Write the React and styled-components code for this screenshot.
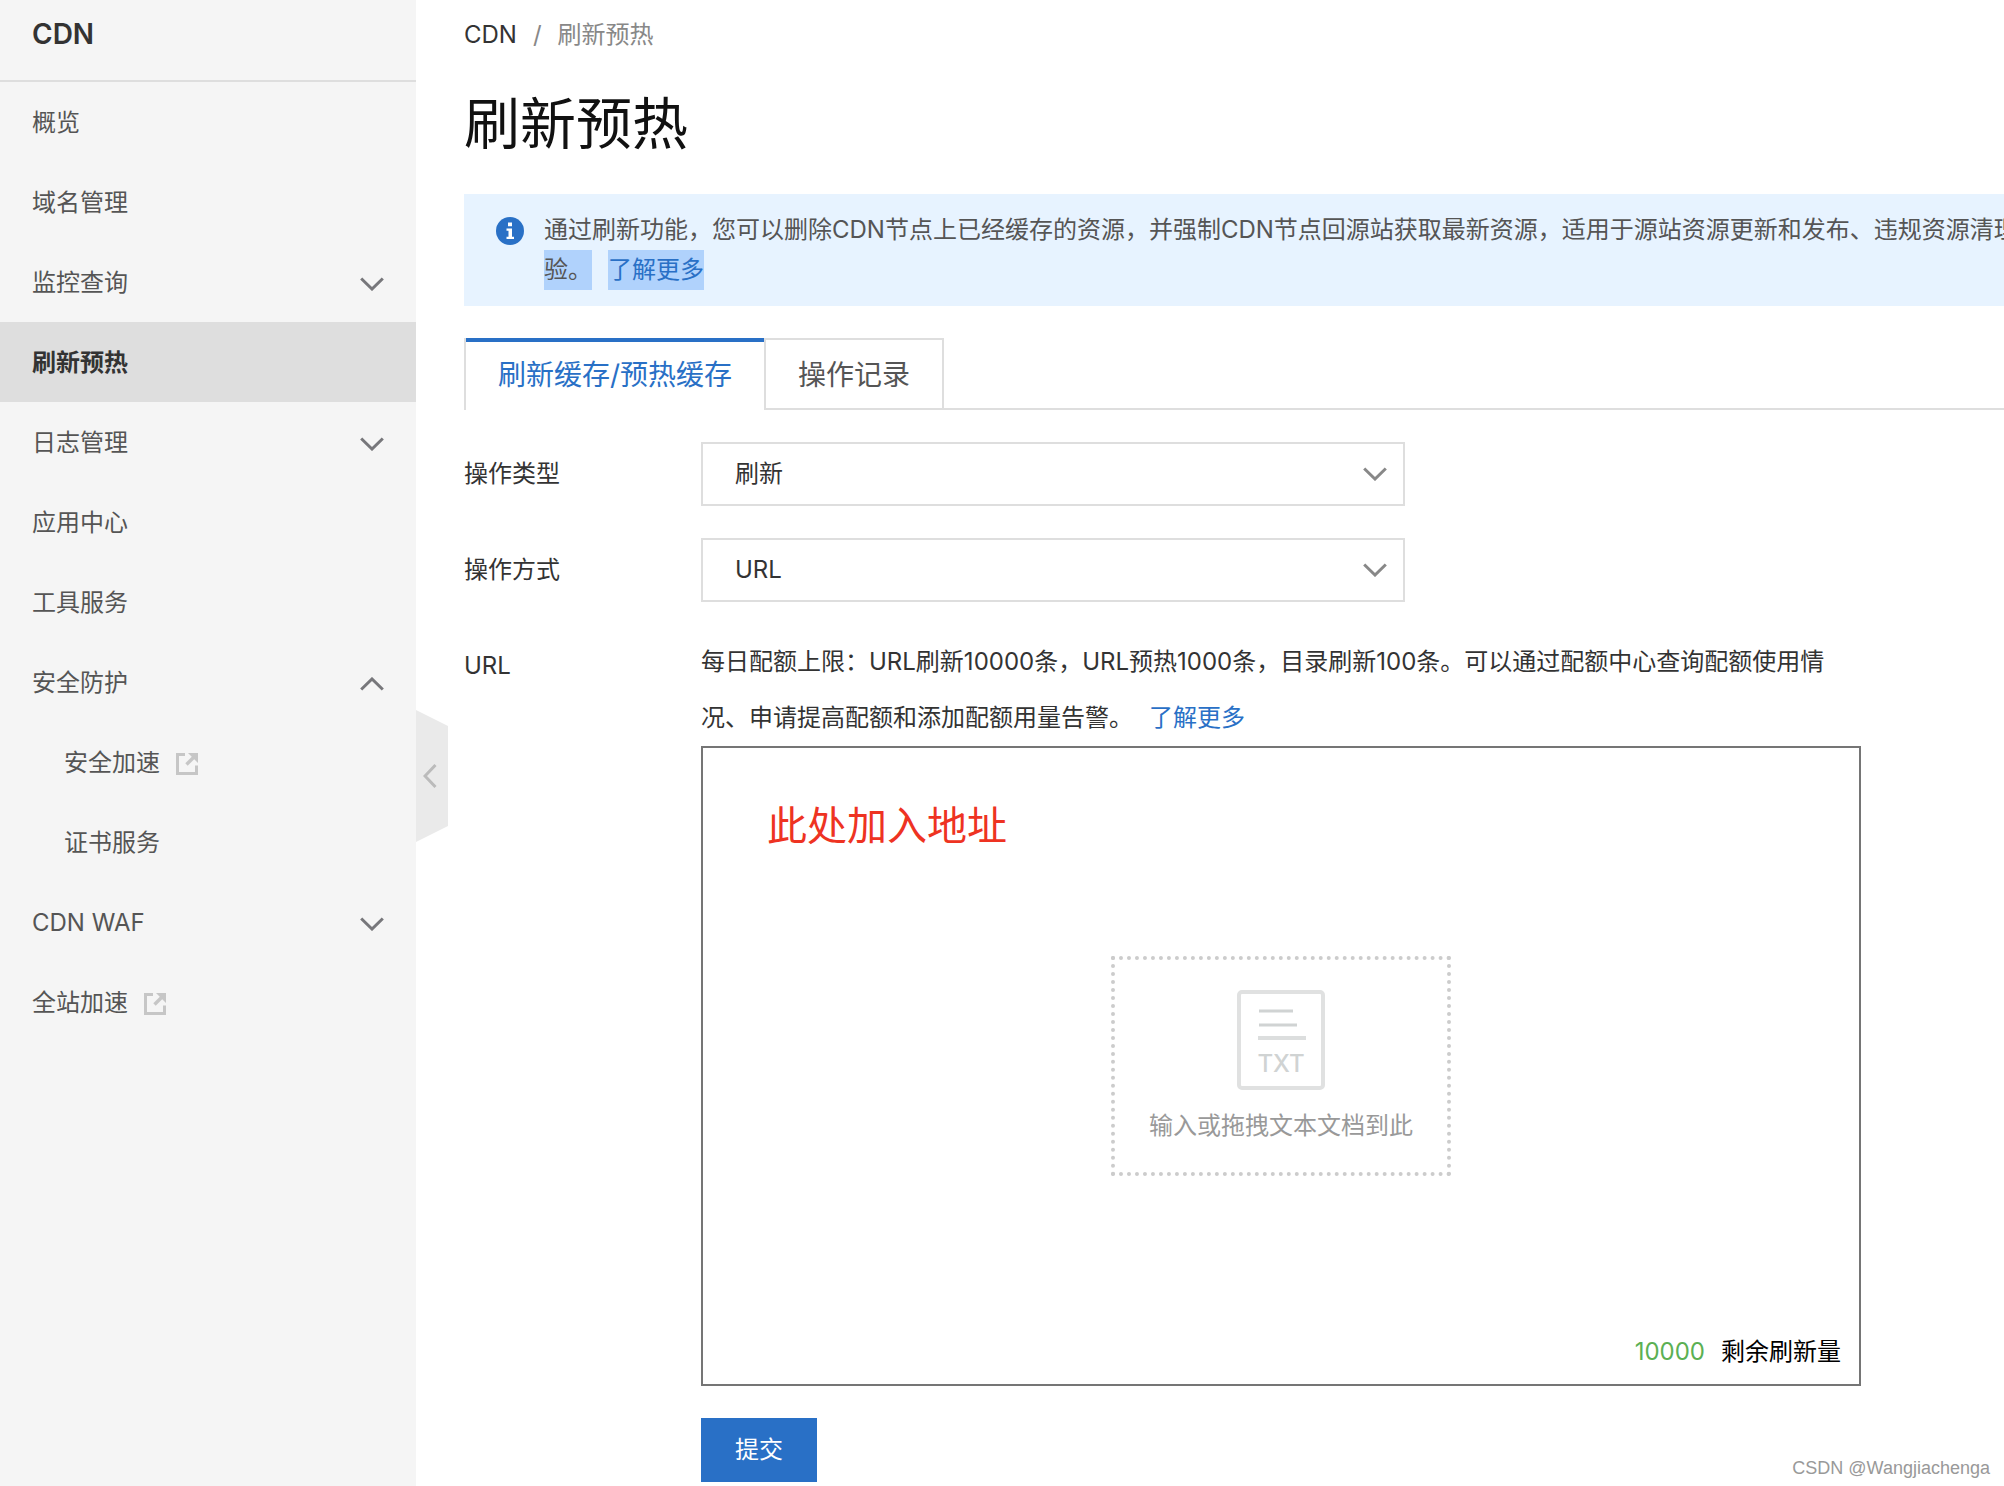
import React from "react"
import styled, { createGlobalStyle, css } from "styled-components"

const menu = [
    { label: "概览" },
    { label: "域名管理" },
    { label: "监控查询", arrow: "down" },
    { label: "刷新预热", active: true },
    { label: "日志管理", arrow: "down" },
    { label: "应用中心" },
    { label: "工具服务" },
    { label: "安全防护", arrow: "up" },
    { label: "安全加速", nested: true, external: true },
    { label: "证书服务", nested: true },
    { label: "CDN WAF", arrow: "down" },
    { label: "全站加速", external: true },
]

const fields = [
    { id: "type", label: "操作类型", options: ["刷新", "预热"] },
    { id: "method", label: "操作方式", options: ["URL", "目录"] },
]

function Chevron({ up }) {
    return (
        <ChevronIcon viewBox="0 0 24 14" $up={up} aria-hidden="true">
            <path d="M1.2 1.5 12 12 22.8 1.5" />
        </ChevronIcon>
    )
}

function External() {
    return (
        <ExternalIcon viewBox="0 0 22 22" aria-hidden="true">
            <path d="M9 1.5H1.5v19h19V12.5" fill="none" stroke="currentColor" strokeWidth="3" />
            <path d="M10.5 11.5 17.5 4.5" fill="none" stroke="currentColor" strokeWidth="3.4" />
            <path d="M12 0H22v10z" fill="currentColor" />
        </ExternalIcon>
    )
}

function Sidebar() {
    return (
        <Aside>
            <Brand>CDN</Brand>
            <nav>
                {menu.map(({ label, arrow, active, nested, external }) => (
                    <MenuItem key={label} href="#" $active={active} $nested={nested}>
                        {label}
                        {external && <External />}
                        {arrow && <Chevron up={arrow === "up"} />}
                    </MenuItem>
                ))}
            </nav>
            <Collapse type="button" aria-label="收起">
                <svg width="14" height="26" viewBox="0 0 14 26" fill="none" stroke="#bbb" strokeWidth="3">
                    <path d="M12.5 2 2 13l10.5 11" />
                </svg>
            </Collapse>
        </Aside>
    )
}

function Notice() {
    return (
        <NoticeBox>
            <svg width="28" height="28" viewBox="0 0 28 28" aria-hidden="true">
                <circle cx="14" cy="14" r="14" fill="#2970c6" />
                <path d="M12 5.5h4v3.8h-4zM10.5 11.5H16v8.3h2V22h-7.5v-2.2h2v-6.1h-2z" fill="#fff" />
            </svg>
            <p>
                通过刷新功能，您可以删除CDN节点上已经缓存的资源，并强制CDN节点回源站获取最新资源，适用于源站资源更新和发布、违规资源清理
                <br />
                <Selected>验。</Selected>
                <Selected as={TextLink} href="#">了解更多</Selected>
            </p>
        </NoticeBox>
    )
}

function UrlField() {
    return (
        <div>
            <Help>
                每日配额上限：URL刷新10000条，URL预热1000条，目录刷新100条。可以通过配额中心查询配额使用情况、申请提高配额和添加配额用量告警。
                <TextLink href="#">了解更多</TextLink>
            </Help>
            <Editor>
                <textarea id="url" defaultValue="此处加入地址" spellCheck={false} />
                <DropHint>
                    <svg width="88" height="100" viewBox="0 0 88 100" fill="none" stroke="#d0d3d3" aria-hidden="true">
                        <rect x="2" y="2" width="84" height="96" rx="3" stroke="#e0e1e1" strokeWidth="4" />
                        <path d="M22 21h34M22 35h38" strokeWidth="3" />
                        <path d="M21 48h48" stroke="#dcdede" strokeWidth="4" />
                        <text x="44" y="82" textAnchor="middle" fontSize="24" fontWeight="500" fill="#d0d3d3" stroke="none">TXT</text>
                    </svg>
                    输入或拖拽文本文档到此
                </DropHint>
                <Quota>
                    <b>10000</b>剩余刷新量
                </Quota>
            </Editor>
            <Submit type="submit">提交</Submit>
        </div>
    )
}

export default function App() {
    return (
        <Page>
            <GlobalStyle />
            <Sidebar />
            <Main>
                <Breadcrumb>
                    <a href="#">CDN</a>
                    <span>/</span>
                    <span>刷新预热</span>
                </Breadcrumb>
                <Title>刷新预热</Title>
                <Notice />
                <Tabs role="tablist">
                    <Tab type="button" role="tab" aria-selected="true" $active>刷新缓存/预热缓存</Tab>
                    <Tab type="button" role="tab" aria-selected="false">操作记录</Tab>
                </Tabs>
                <Form onSubmit={(e) => e.preventDefault()}>
                    {fields.map(({ id, label, options }) => (
                        <React.Fragment key={id}>
                            <Label htmlFor={id}>{label}</Label>
                            <SelectBox>
                                <select id={id}>
                                    {options.map((o) => <option key={o}>{o}</option>)}
                                </select>
                                <Chevron />
                            </SelectBox>
                        </React.Fragment>
                    ))}
                    <Label htmlFor="url">URL</Label>
                    <UrlField />
                </Form>
            </Main>
            <Watermark>CSDN @Wangjiachenga</Watermark>
        </Page>
    )
}

const GlobalStyle = createGlobalStyle`
    *, *::before, *::after {
        box-sizing: border-box;
    }
    body {
        margin: 0;
        background: #fff;
        color: #333;
    }
    body, button, select, textarea {
        font-family: Inter, "Noto Sans CJK SC", sans-serif;
        font-size: 24px;
        line-height: 40px;
    }
    a {
        color: inherit;
        text-decoration: none;
    }
    p, h1 {
        margin: 0;
    }
`

const Page = styled.div`
    display: flex;
    min-height: 100vh;
    position: relative;
    overflow: hidden;
`

const Aside = styled.aside`
    flex: 0 0 416px;
    position: relative;
    background: #f5f5f5;
`

const Brand = styled.div`
    height: 82px;
    padding: 14px 32px;
    border-bottom: 2px solid #dedede;
    font-size: 28px;
    font-weight: 600;
`

const MenuItem = styled.a`
    display: flex;
    align-items: center;
    gap: 16px;
    height: 80px;
    padding: 2px 32px 0 ${({ $nested }) => ($nested ? "64px" : "32px")};
    color: #555;
    ${({ $active }) => $active && css`
        background: #dedede;
        color: #333;
        font-weight: 600;
    `}
    svg {
        margin-top: 2px;
    }
`

const ChevronIcon = styled.svg`
    width: 24px;
    height: 14px;
    margin-left: auto;
    fill: none;
    stroke: #77777b;
    stroke-width: 3;
    transform: ${({ $up }) => ($up ? "rotate(180deg)" : "none")};
`

const ExternalIcon = styled.svg`
    width: 22px;
    height: 22px;
    color: #c6c6c6;
`

const Collapse = styled.button`
    position: absolute;
    left: 100%;
    top: 710px;
    width: 32px;
    height: 132px;
    padding: 0 0 0 7px;
    display: flex;
    align-items: center;
    border: 0;
    background: #eaeaea;
    clip-path: polygon(0 0, 100% 16px, 100% calc(100% - 16px), 0 100%);
`

const Main = styled.main`
    flex: 1;
    min-width: 0;
    padding-left: 48px;
`

const Breadcrumb = styled.nav`
    display: flex;
    gap: 16px;
    padding-top: 15px;
    color: #888;
    a {
        color: #333;
    }
`

const Title = styled.h1`
    padding: 29px 0 30px;
    color: #111;
    font-size: 56px;
    font-weight: 400;
    line-height: 80px;
`

const NoticeBox = styled.div`
    display: flex;
    gap: 20px;
    padding: 16px 0 16px 32px;
    background: #e7f3ff;
    color: #555;
    white-space: nowrap;
    overflow: hidden;
    svg {
        flex: none;
        margin-top: 7px;
    }
`

const TextLink = styled.a`
    display: inline-block;
    margin-left: 16px;
    color: #2970c6;
`

const Selected = styled.span`
    display: inline-block;
    background: #b0d2fc;
`

const Tabs = styled.div`
    display: flex;
    margin-top: 32px;
    box-shadow: inset 0 -2px #dedede;
`

const Tab = styled.button`
    height: 72px;
    padding: 2px 32px 0;
    border: 2px solid #dedede;
    background: #fff;
    color: #555;
    font-size: 28px;
    ${({ $active }) => $active && css`
        border-width: 0 0 0 2px;
        box-shadow: inset 0 4px #2970c6;
        color: #2970c6;
    `}
`

const Form = styled.form`
    display: grid;
    grid-template-columns: 237px minmax(0, 1160px);
    row-gap: 32px;
    padding: 32px 0 4px;
`

const Label = styled.label`
    line-height: 64px;
`

const SelectBox = styled.div`
    position: relative;
    width: 704px;
    height: 64px;
    select {
        appearance: none;
        width: 100%;
        height: 100%;
        padding: 0 64px 0 32px;
        border: 2px solid #dedede;
        border-radius: 0;
        background: #fff;
        color: #333;
    }
    svg {
        position: absolute;
        right: 18px;
        top: 25px;
        stroke: #888;
        pointer-events: none;
    }
`

const Help = styled.p`
    line-height: 56px;
    ${TextLink} {
        line-height: 40px;
    }
`

const Editor = styled.div`
    position: relative;
    display: flex;
    height: 640px;
    textarea {
        flex: 1;
        padding: 48px 64px;
        border: 2px solid #757575;
        background: #fff;
        color: #ee3322;
        font-size: 40px;
        line-height: 60px;
        resize: none;
        outline: 0;
    }
`

const DropHint = styled.div`
    position: absolute;
    left: 50%;
    top: 50%;
    transform: translate(-50%, -50%);
    width: 340px;
    height: 220px;
    padding-top: 30px;
    display: flex;
    flex-direction: column;
    align-items: center;
    gap: 16px;
    border: 4px dotted #ccc;
    color: #999;
    pointer-events: none;
`

const Quota = styled.div`
    position: absolute;
    right: 20px;
    bottom: 14px;
    display: flex;
    gap: 16px;
    color: #000;
    b {
        color: #5bb053;
        font-weight: 400;
    }
`

const Submit = styled.button`
    display: block;
    height: 64px;
    margin-top: 32px;
    padding: 0 34px;
    border: 0;
    background: #2970c6;
    color: #fff;
`

const Watermark = styled.div`
    position: absolute;
    right: 14px;
    bottom: 4px;
    color: #999;
    font-family: "Liberation Sans", sans-serif;
    font-size: 18px;
    line-height: 28px;
`
